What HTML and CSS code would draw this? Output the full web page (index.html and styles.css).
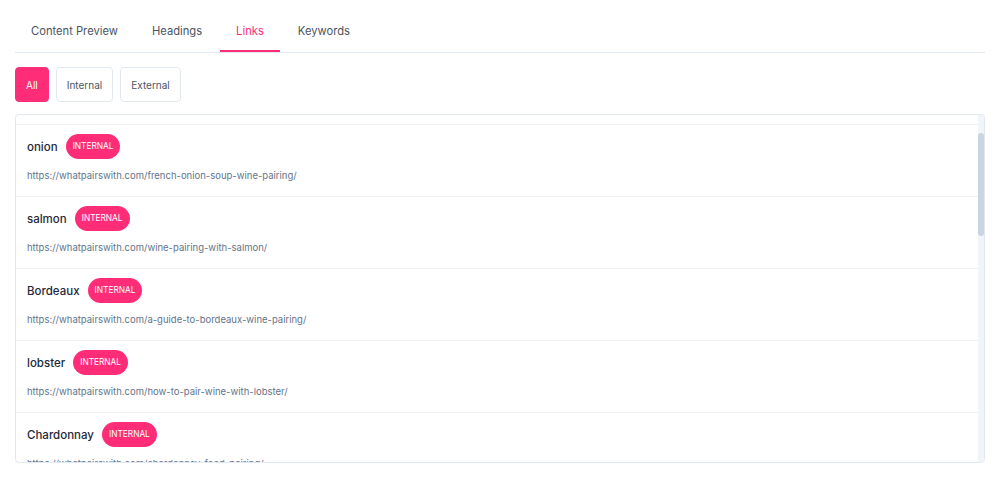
FILE: index.html
```html
<!DOCTYPE html>
<html>
<head>
<meta charset="utf-8">
<link rel="stylesheet" href="styles.css">
</head>
<body>
<div class="page">
  <nav class="tabs">
    <div class="tab">Content Preview</div>
    <div class="tab">Headings</div>
    <div class="tab active">Links</div>
    <div class="tab">Keywords</div>
  </nav>
  <div class="filters">
    <button class="filter on">All</button>
    <button class="filter">Internal</button>
    <button class="filter">External</button>
  </div>
  <div class="list-box">
    <div class="list">
      <div class="row">
        <div class="row-head"><span class="anchor">onion</span><span class="badge">INTERNAL</span></div>
        <div class="url">https://whatpairswith.com/french-onion-soup-wine-pairing/</div>
      </div>
      <div class="row">
        <div class="row-head"><span class="anchor">salmon</span><span class="badge">INTERNAL</span></div>
        <div class="url">https://whatpairswith.com/wine-pairing-with-salmon/</div>
      </div>
      <div class="row">
        <div class="row-head"><span class="anchor">Bordeaux</span><span class="badge">INTERNAL</span></div>
        <div class="url">https://whatpairswith.com/a-guide-to-bordeaux-wine-pairing/</div>
      </div>
      <div class="row">
        <div class="row-head"><span class="anchor">lobster</span><span class="badge">INTERNAL</span></div>
        <div class="url">https://whatpairswith.com/how-to-pair-wine-with-lobster/</div>
      </div>
      <div class="row">
        <div class="row-head"><span class="anchor">Chardonnay</span><span class="badge">INTERNAL</span></div>
        <div class="url">https://whatpairswith.com/chardonnay-food-pairing/</div>
      </div>
    </div>
    <div class="scrollbar"><div class="thumb"></div></div>
  </div>
</div>
</body>
</html>
```
FILE: styles.css
```css
* { box-sizing: border-box; }
html, body { margin: 0; background: #fff; }
body { font-family: Inter, "Noto Sans", sans-serif; color: #1e293b; }
.page { padding: 10px 15px 0 15px; }
.tabs {
  display: flex;
  gap: 2px;
  border-bottom: 1px solid #e2e8f0;
}
.tab {
  padding: 13px 16px 13px;
  font-size: 11.2px;
  color: #4b5563;
  line-height: 16px;
  border-radius: 4px 4px 0 0;
}
.tab.active {
  color: #ff2d78;
  box-shadow: inset 0 -2px 0 #ff2d78;
}
.filters {
  display: flex;
  gap: 7px;
  margin-top: 14px;
}
.filter {
  font-family: inherit;
  font-size: 10px;
  height: 35px;
  padding: 0 10px;
  background: #fff;
  color: #4b5563;
  border: 1px solid #e2e8f0;
  border-radius: 4px;
}
.filter.on {
  background: #ff2d78;
  border-color: #ff2d78;
  color: #fff;
}
.list-box {
  position: relative;
  margin-top: 12px;
  height: 349px;
  border: 1px solid #e2e8f0;
  border-radius: 4px;
  overflow: hidden;
}
.list {
  padding-top: 9px;
  padding-right: 6px;
}
.row {
  border-top: 1px solid #eef1f5;
  padding: 9px 11px 12px;
}
.row-head {
  display: flex;
  align-items: center;
  gap: 8px;
  height: 25px;
}
.anchor {
  font-size: 11.5px;
  font-weight: 500;
  color: #1e293b;
}
.badge {
  background: #ff2d78;
  color: #fff;
  font-size: 8.3px;
  height: 25px;
  line-height: 25px;
  padding: 0 7px;
  border-radius: 13px;
}
.url {
  margin-top: 9px;
  font-size: 9.5px;
  line-height: 16px;
  color: #64748b;
}
.scrollbar {
  position: absolute;
  top: 0;
  right: 0;
  bottom: 0;
  width: 6px;
  background: #f1f5f9;
}
.thumb {
  margin-top: 18px;
  height: 103px;
  background: #cbd5e1;
  border-radius: 3px;
}
```
